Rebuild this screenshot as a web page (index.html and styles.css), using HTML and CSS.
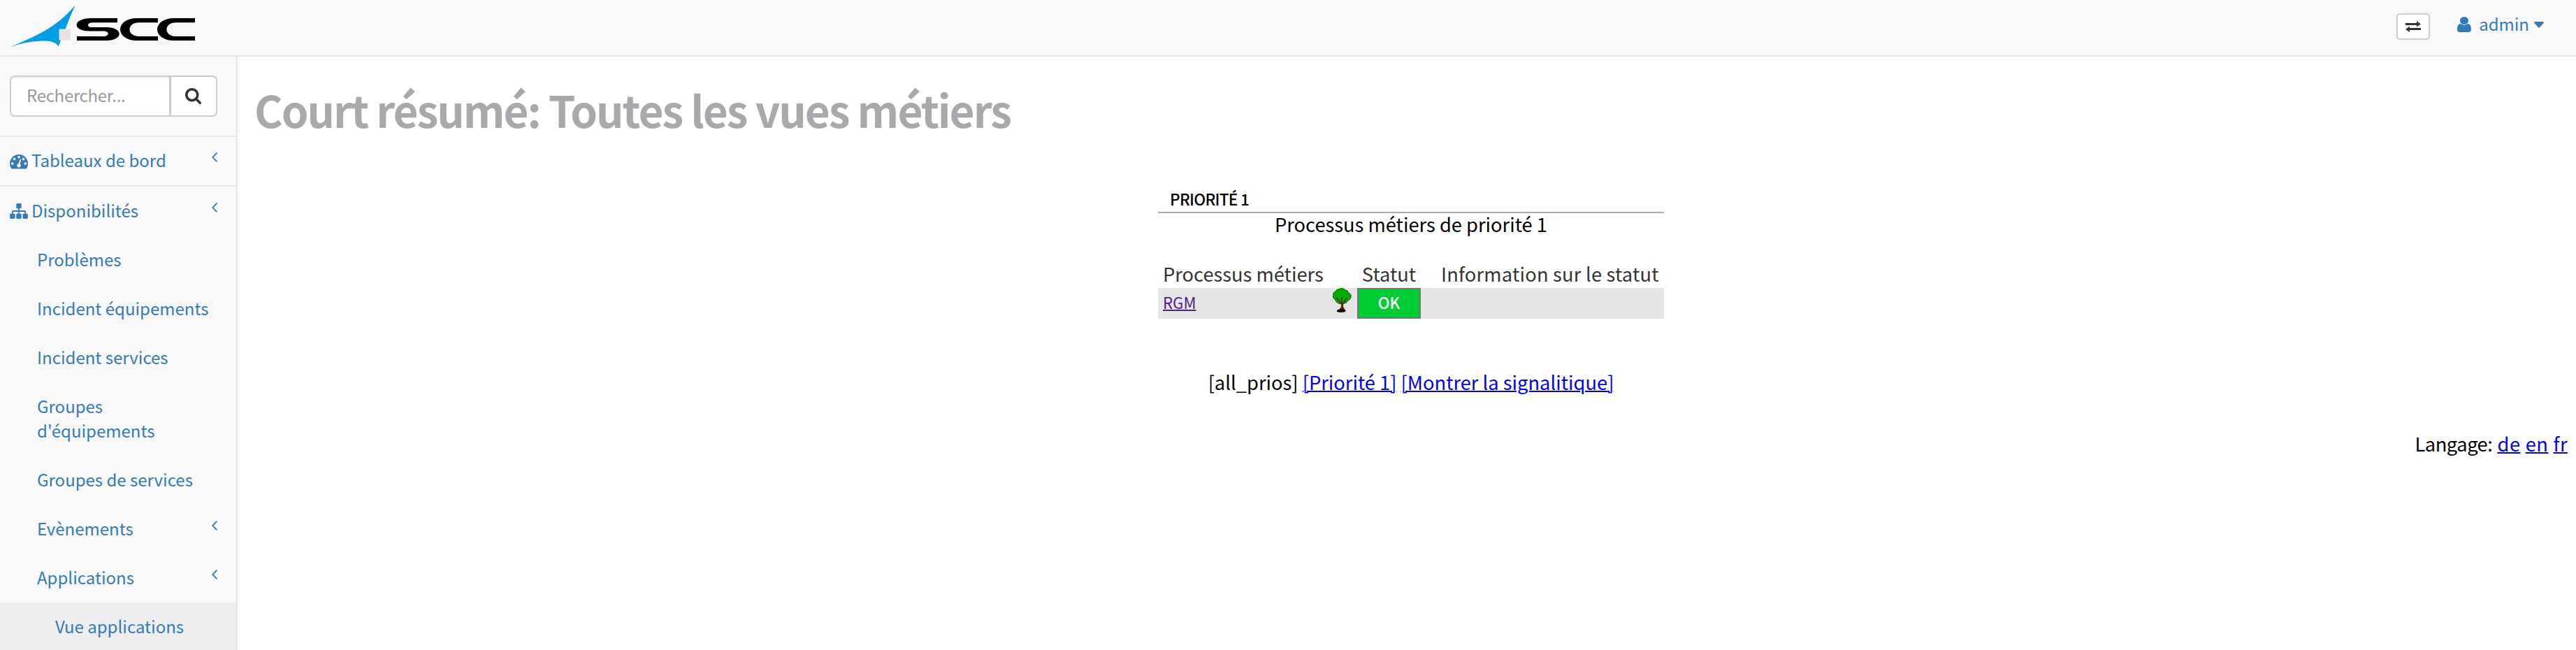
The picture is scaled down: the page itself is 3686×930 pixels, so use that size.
FILE: index.html
```
<!DOCTYPE html>
<html lang="fr">
<head>
<meta charset="utf-8">
<title>Court résumé</title>
<link rel="stylesheet" href="styles.css">
</head>
<body>
<header class="topbar">
  <svg class="logo" viewBox="0 0 279 68" width="279" height="68">
    <path fill="#009fe3" d="M14 67.600C47 53 80 41 107.500 7.500C98 29 90 51 83.500 66.500C79 57 62 58 47 59.500C34 61 25 64 14 67.600Z"/>
    <path fill="#e3e3e3" d="M84.500 41.500H101V57.500H84.500Z"/>
    <path d="M168 26H131C103 26 103 44.500 128 44.500H148C157 44.500 157 52 148 52H110V58H152C177 58 177 39 152 39H131C124 39 124 32.300 133 32.300H168Z"/>
    <path d="M226 26H196C164 26 164 58 196 58H226V52H199C181 52 181 32.300 199 32.300H226Z"/>
    <path d="M279 26H249C217 26 217 58 249 58H279V52H252C234 52 234 32.300 252 32.300H279Z"/>
  </svg>
  <div class="tools">
    <button class="swap"><svg viewBox="0 0 22 16" width="22" height="16"><path fill="#333" d="M0 3H16V0L22 4.500L16 8.200V6H0ZM22 10H6V7.500L0 12L6 16V13H22Z"/></svg></button>
    <a class="user">
      <svg viewBox="256 128 1280 1536" width="20" height="22" preserveAspectRatio="none"><path fill="currentColor" d="M1536 1399q0 109-62.500 187t-150.500 78h-854q-88 0-150.500-78t-62.500-187q0-85 8.500-160.500t31.500-152 58.500-131 94-89 134.500-34.500q131 128 313 128t313-128q76 0 134.500 34.500t94 89 58.500 131 31.500 152 8.500 160.500zm-256-887q0 159-112.500 271.500t-271.500 112.500-271.500-112.500-112.500-271.500 112.500-271.500 271.500-112.500 271.500 112.500 112.500 271.500z"/></svg>
      <span class="username">admin</span>
      <svg viewBox="0 0 14 9" width="14" height="9"><path fill="currentColor" d="M1 0H13Q14.500 .5 13.500 2L8 8.200Q7 9 6 8.200L.5 2Q-.5 .5 1 0Z"/></svg>
    </a>
  </div>
</header>
<div class="body">
  <nav class="sidebar">
    <div class="search">
      <div class="field">Rechercher...</div>
      <div class="go"><svg viewBox="64 128 1664 1664" width="23" height="23"><path fill="#333" d="M1216 832q0-185-131.500-316.500t-316.500-131.500-316.500 131.500-131.500 316.500 131.500 316.500 316.500 131.500 316.500-131.500 131.500-316.500zm512 832q0 52-38 90t-90 38q-54 0-90-38l-343-342q-179 124-399 124-143 0-273.500-55.500t-225-150-150-225-55.500-273.500 55.500-273.500 150-225 225-150 273.500-55.500 273.500 55.500 225 150 150 225 55.500 273.500q0 220-124 399l343 343q37 37 37 90z"/></svg></div>
    </div>
    <a class="item first">
      <svg class="ico" viewBox="0 256 1792 1408" width="26" height="20.500"><path fill="currentColor" d="M384 1152q0-53-37.500-90.500t-90.500-37.500-90.500 37.500-37.500 90.500 37.500 90.500 90.500 37.500 90.500-37.500 37.500-90.500zm192-448q0-53-37.500-90.500t-90.500-37.500-90.500 37.500-37.500 90.500 37.500 90.500 90.500 37.500 90.500-37.500 37.500-90.500zm428 481l101-382q6-26-7.500-48.500t-38.500-29.500-48 6.500-30 39.500l-101 382q-60 5-107 43.500t-63 98.500q-20 77 20 146t117 89 146-20 89-117q16-60-6-117t-72-91zm660-33q0-53-37.500-90.500t-90.500-37.500-90.500 37.500-37.500 90.500 37.500 90.500 90.500 37.500 90.500-37.500 37.500-90.500zm-640-640q0-53-37.500-90.500t-90.500-37.500-90.500 37.500-37.500 90.500 37.500 90.500 90.500 37.500 90.500-37.500 37.500-90.500zm448 192q0-53-37.500-90.500t-90.500-37.500-90.500 37.500-37.500 90.500 37.500 90.500 90.500 37.500 90.500-37.500 37.500-90.500zm320 448q0 261-141 483-19 29-54 29h-1402q-35 0-54-29-141-221-141-483 0-182 71-348t191-286 286-191 348-71 348 71 286 191 191 286 71 348z"/></svg>
      <span>Tableaux de bord</span>
      <svg class="arrow" viewBox="0 0 9 14" width="9" height="14"><path d="M7.500 .7L1.200 7L7.500 13.300"/></svg>
    </a>
    <a class="item">
      <svg class="ico" viewBox="0 128 1792 1536" width="26" height="22"><path fill="currentColor" d="M1792 1248v320q0 40-28 68t-68 28h-320q-40 0-68-28t-28-68v-320q0-40 28-68t68-28h96v-192h-512v192h96q40 0 68 28t28 68v320q0 40-28 68t-68 28h-320q-40 0-68-28t-28-68v-320q0-40 28-68t68-28h96v-192h-512v192h96q40 0 68 28t28 68v320q0 40-28 68t-68 28h-320q-40 0-68-28t-28-68v-320q0-40 28-68t68-28h96v-192q0-52 38-90t90-38h512v-192h-96q-40 0-68-28t-28-68v-320q0-40 28-68t68-28h320q40 0 68 28t28 68v320q0 40-28 68t-68 28h-96v192h512q52 0 90 38t38 90v192h96q40 0 68 28t28 68z"/></svg>
      <span>Disponibilités</span>
      <svg class="arrow" viewBox="0 0 9 14" width="9" height="14"><path d="M7.500 .7L1.200 7L7.500 13.300"/></svg>
    </a>
    <a class="item sub">Problèmes</a>
    <a class="item sub">Incident équipements</a>
    <a class="item sub">Incident services</a>
    <a class="item sub">Groupes<br>d'équipements</a>
    <a class="item sub">Groupes de services</a>
    <a class="item sub">Evènements<svg class="arrow" viewBox="0 0 9 14" width="9" height="14"><path d="M7.500 .7L1.200 7L7.500 13.300"/></svg></a>
    <a class="item sub">Applications<svg class="arrow" viewBox="0 0 9 14" width="9" height="14"><path d="M7.500 .7L1.200 7L7.500 13.300"/></svg></a>
    <a class="item leaf">Vue applications</a>
  </nav>
  <main class="main">
    <h1 class="title">Court résumé: Toutes les vues métiers</h1>
    <section class="panel">
      <h2 class="prio">PRIORITÉ 1</h2>
      <p class="desc">Processus métiers de priorité 1</p>
      <div class="row head"><span class="c1">Processus métiers</span><span class="c2">Statut</span><span class="c3">Information sur le statut</span></div>
      <div class="row data">
        <div class="c1 name"><a class="visited">RGM</a>
          <svg class="tree" viewBox="0 0 27 35" width="27" height="35">
            <path fill="#5a2600" d="M12 17H15.500L15 27L19 33H8L12 27Z"/>
            <path fill="#00b000" stroke="#125200" d="M9 1.500Q14-1 18 3Q22 3 22 7Q27 8 26 13Q25 17 22 18Q20 22 15 22.500H10Q4 21 4 17Q-1 14 1 10Q0 6 4 5Q5 2 9 1.500Z"/>
            <path fill="none" stroke="#5a2600" stroke-width="1.500" d="M5 14L12 22M12.500 13L13.500 25M20 14L15 22"/>
            <path d="M6 32Q12 28 18 32V34Q12 36 6 34Z"/>
          </svg>
        </div>
        <div class="ok">OK</div>
        <div></div>
      </div>
    </section>
    <p class="links">[all_prios] <a>[Priorité 1]</a> <a>[Montrer la signalitique]</a></p>
    <p class="lang"><span class="label">Langage:</span> <a>de</a> <a>en</a> <a>fr</a></p>
  </main>
</div>
</body>
</html>
```
FILE: styles.css
```
* { box-sizing: border-box; }
html, body { height: 100%; }
body {
  margin: 0;
  height: 930px;
  overflow: hidden;
  background: #fff;
  color: #000;
  font: 24px/35px "Noto Sans CJK SC", "Noto Sans", sans-serif;
}
svg { display: block; flex: none; }
h1, h2, p { margin: 0; font-weight: 400; }

.topbar {
  display: flex;
  justify-content: space-between;
  height: 81px;
  background: #f8f8f8;
  border-bottom: 2px solid #e7e7e7;
}
.tools { display: flex; align-items: flex-start; padding-right: 46px; }
.swap {
  display: flex;
  align-items: center;
  justify-content: center;
  width: 48px;
  height: 38px;
  margin-top: 19px;
  padding: 0;
  background: #fff;
  border: 2px solid #ccc;
  border-radius: 5px;
}
.user { display: flex; align-items: center; margin: 16px 0 0 39px; color: #337ab7; height: 38px; }
.username { margin: 0 7px 0 11px; padding-bottom: 3px; }

.body { display: flex; height: 849px; }
.sidebar {
  width: 340px;
  flex: none;
  overflow: hidden;
  background: #f8f8f8;
  border-right: 2px solid #e7e7e7;
}
.search { display: flex; padding: 27px 27px 27px 14px; border-bottom: 2px solid #e7e7e7; height: 115px; }
.field {
  width: 231px;
  height: 59px;
  padding: 8px 0 0 22px;
  color: #999;
  background: #fff;
  border: 2px solid #ccc;
  border-right-width: 3px;
  border-radius: 7px 0 0 7px;
  box-shadow: inset 0 2px 2px rgba(0, 0, 0, .07);
  letter-spacing: -.3px;
}
.go {
  display: flex;
  align-items: center;
  width: 66px;
  height: 59px;
  padding-left: 20px;
  background: #fff;
  border: 2px solid #ccc;
  border-left: 0;
  border-radius: 0 7px 7px 0;
}
.item { display: flex; min-height: 70px; padding: 16px 26px 19px 14px; color: #337ab7; }
.first { height: 71px; padding-top: 15px; border-bottom: 2px solid #e7e7e7; }
.ico { margin: 8px 5px 0 0; }
.first .ico { margin-top: 10px; }
.arrow { margin: 7px 0 0 auto; fill: none; stroke: #337ab7; stroke-width: 1.800px; }
.sub { padding-left: 53px; }
.leaf { padding-left: 79px; background: #eee; }

.main { flex: 1; padding: 35px 12px 0 24px; font-size: 27.300px; line-height: 40px; }
.title {
  color: #a7a9ac;
  font-size: 62px;
  font-weight: 700;
  line-height: 80px;
  letter-spacing: -2px;
}
.panel { width: 724px; margin: 69px auto 0; }
.prio {
  padding-left: 17px;
  border-bottom: 2px solid #aaa;
  font-size: 22.500px;
  font-weight: 500;
  line-height: 38px;
  letter-spacing: -.7px;
}
.desc { line-height: 30px; text-align: center; }
.row { display: grid; grid-template-columns: 285px 91px 1fr; }
.head { margin-top: 41px; padding-bottom: 6px; line-height: 30px; color: #333; }
.c1 { padding-left: 7px; }
.c2 { text-align: center; }
.c3 { padding-left: 29px; letter-spacing: .2px; }
.data { height: 44px; background: #e6e6e6; font-size: 22.200px; }
.name { display: flex; justify-content: space-between; padding-right: 8px; }
.visited { color: #551a8b; text-decoration: underline; text-decoration-thickness: 2px; }
.ok {
  height: 44px;
  border: 2px solid #777;
  background: #00cc33;
  color: #fff;
  font-weight: 500;
  line-height: 36px;
  text-align: center;
}
.links { margin-top: 70px; text-align: center; }
.lang { margin-top: 48px; text-align: right; word-spacing: 1px; }
.links a, .lang a { color: #0000ee; text-decoration: underline; text-decoration-thickness: 2px; }
.lang a { letter-spacing: .5px; }
.label { letter-spacing: -.5px; }
```
